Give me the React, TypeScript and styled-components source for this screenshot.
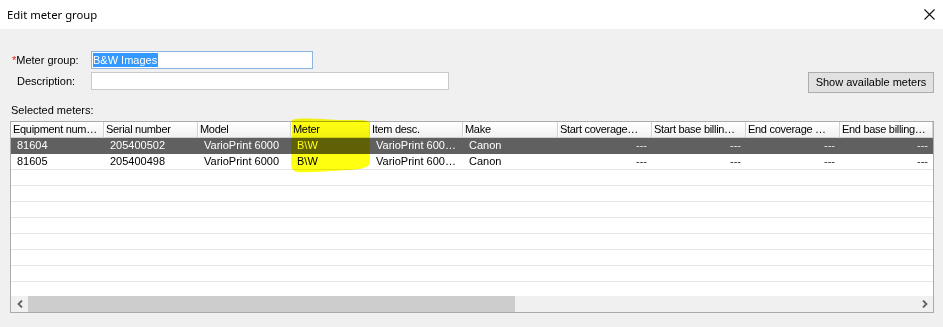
import { type FC } from 'react';
import styled, { createGlobalStyle } from 'styled-components';

const GlobalStyle = createGlobalStyle`
  html, body {
    margin: 0;
    padding: 0;
    background: #f0f0f0;
  }
  body {
    font-family: 'Liberation Sans', Arial, sans-serif;
    font-size: 11px;
    color: #000;
  }
`;

const Window = styled.div`
  width: 943px;
  height: 327px;
  overflow: hidden;
  background: #f0f0f0;
  display: flex;
  flex-direction: column;
`;

const TitleBar = styled.div`
  height: 29px;
  flex: none;
  background: #fff;
  display: flex;
  align-items: center;
  justify-content: space-between;
  padding: 0 8px 0 7px;
  font-family: 'Noto Sans', 'Open Sans', sans-serif;
  font-size: 11.3px;
  color: #000;
`;

const Body = styled.div`
  flex: 1;
  display: flex;
  flex-direction: column;
  padding: 22px 9px 0 10px;
`;

const FormRow = styled.div<{ $gap?: number }>`
  display: flex;
  align-items: center;
  height: 18px;
  margin-bottom: ${(p) => p.$gap ?? 0}px;
`;

const Label = styled.label<{ $indent: number }>`
  width: 81px;
  flex: none;
  padding-left: ${(p) => p.$indent}px;
  box-sizing: border-box;
  white-space: nowrap;
`;

const Required = styled.span`
  color: #e0201a;
`;

const TextBox = styled.div<{ $width: number; $focused?: boolean }>`
  width: ${(p) => p.$width}px;
  height: 18px;
  box-sizing: border-box;
  background: #fff;
  border: 1px solid ${(p) => (p.$focused ? '#8fb4e0' : '#c9c9c9')};
  display: flex;
  align-items: center;
  padding-left: 1px;
`;

const Selection = styled.span`
  background: #3399ff;
  color: #fff;
  line-height: 14px;
  padding: 0 1px 0 0;
`;

const Spacer = styled.div`
  flex: 1;
`;

const Button = styled.button`
  width: 126px;
  height: 21px;
  box-sizing: border-box;
  border: 1px solid #adadad;
  background: #e1e1e1;
  font-family: inherit;
  font-size: 11px;
  color: #000;
  padding: 0;
  margin-top: 2px;
`;

const Caption = styled.div`
  margin-top: 14px;
  height: 13px;
  line-height: 13px;
  padding-left: 1px;
`;

const TableWrap = styled.div`
  position: relative;
  margin-top: 4px;
  width: 924px;
`;

const Table = styled.div`
  height: 192px;
  box-sizing: border-box;
  border: 1px solid #a9abb0;
  background: #fff;
  display: flex;
  flex-direction: column;
  overflow: hidden;
`;

const HeaderRow = styled.div`
  display: flex;
  height: 15px;
  flex: none;
  background: linear-gradient(#ffffff, #f1f1f1);
  border-bottom: 1px solid #d0d0d0;
`;

const HeaderCell = styled.div<{ $w: number }>`
  width: ${(p) => p.$w}px;
  flex: none;
  box-sizing: border-box;
  padding-left: 2px;
  border-right: 1px solid #d2d2d2;
  box-shadow: inset 1px 0 0 #ffffff;
  line-height: 15px;
  letter-spacing: -0.3px;
  white-space: nowrap;
  overflow: hidden;
`;

const Rows = styled.div`
  flex: 1;
  overflow: hidden;
`;

const Row = styled.div<{ $selected?: boolean }>`
  display: flex;
  height: 16px;
  box-sizing: border-box;
  border-bottom: 1px solid ${(p) => (p.$selected ? '#606060' : '#e4e4e4')};
  background: ${(p) => (p.$selected ? '#606060' : '#fff')};
  color: ${(p) => (p.$selected ? '#fff' : '#000')};
`;

const Cell = styled.div<{ $w: number; $right?: boolean; $dim?: boolean }>`
  width: ${(p) => p.$w}px;
  flex: none;
  box-sizing: border-box;
  padding: ${(p) => (p.$right ? '0 5px 0 0' : '0 0 0 6px')};
  text-align: ${(p) => (p.$right ? 'right' : 'left')};
  line-height: 15px;
  white-space: nowrap;
  overflow: hidden;
  opacity: ${(p) => (p.$dim ? 0.85 : 1)};
`;

const ScrollBar = styled.div`
  height: 16px;
  flex: none;
  display: flex;
  background: #f0f0f0;
`;

const ScrollButton = styled.div`
  width: 17px;
  flex: none;
  display: flex;
  align-items: center;
  justify-content: center;
  background: #f0f0f0;
`;

const Thumb = styled.div`
  width: 487px;
  background: #cdcdcd;
`;

const Track = styled.div`
  flex: 1;
`;

const Highlight = styled.svg`
  position: absolute;
  left: 279px;
  top: -4px;
  mix-blend-mode: multiply;
  pointer-events: none;
`;

type Col = { title: string; w: number; right?: boolean };

const columns: Col[] = [
  { title: 'Equipment num…', w: 93 },
  { title: 'Serial number', w: 94 },
  { title: 'Model', w: 93 },
  { title: 'Meter', w: 79 },
  { title: 'Item desc.', w: 93 },
  { title: 'Make', w: 95 },
  { title: 'Start coverage…', w: 94, right: true },
  { title: 'Start base billin…', w: 94, right: true },
  { title: 'End coverage …', w: 94, right: true },
  { title: 'End base billing…', w: 93, right: true },
];

const data = [
  ['81604', '205400502', 'VarioPrint 6000', 'B\\W', 'VarioPrint 600…', 'Canon', '---', '---', '---', '---'],
  ['81605', '205400498', 'VarioPrint 6000', 'B\\W', 'VarioPrint 600…', 'Canon', '---', '---', '---', '---'],
];

const CloseIcon: FC = () => (
  <svg width="11" height="11" viewBox="0 0 11 11">
    <path d="M0.5 0.5 L10.5 10.5 M10.5 0.5 L0.5 10.5" stroke="#111" strokeWidth="1.1" />
  </svg>
);

const Chevron: FC<{ dir: 'left' | 'right' }> = ({ dir }) => (
  <svg width="6" height="8" viewBox="0 0 6 8">
    <path
      d={dir === 'left' ? 'M5 0.5 L1.5 4 L5 7.5' : 'M1 0.5 L4.5 4 L1 7.5'}
      fill="none"
      stroke="#606060"
      strokeWidth="1.8"
    />
  </svg>
);

const App: FC = () => {
  return (
    <Window>
      <GlobalStyle />
      <TitleBar>
        <span>Edit meter group</span>
        <CloseIcon />
      </TitleBar>
      <Body>
        <FormRow $gap={3}>
          <Label $indent={2}>
            <Required>*</Required>Meter group:
          </Label>
          <TextBox $width={222} $focused>
            <Selection>B&amp;W Images</Selection>
          </TextBox>
        </FormRow>
        <FormRow>
          <Label $indent={7}>Description:</Label>
          <TextBox $width={358} />
          <Spacer />
          <Button>Show available meters</Button>
        </FormRow>
        <Caption>Selected meters:</Caption>
        <TableWrap>
          <Table>
            <HeaderRow>
              {columns.map((c) => (
                <HeaderCell key={c.title} $w={c.w}>
                  {c.title}
                </HeaderCell>
              ))}
            </HeaderRow>
            <Rows>
              {data.map((r, i) => (
                <Row key={r[0]} $selected={i === 0}>
                  {r.map((v, j) => (
                    <Cell key={j} $w={columns[j].w} $right={columns[j].right} $dim={v === '---'}>
                      {v}
                    </Cell>
                  ))}
                </Row>
              ))}
              {Array.from({ length: 7 }).map((_, i) => (
                <Row key={`e${i}`} />
              ))}
            </Rows>
            <ScrollBar>
              <ScrollButton>
                <Chevron dir="left" />
              </ScrollButton>
              <Thumb />
              <Track />
              <ScrollButton>
                <Chevron dir="right" />
              </ScrollButton>
            </ScrollBar>
          </Table>
          <Highlight width="84" height="58" viewBox="0 0 84 58">
            <path
              d="M3 3 C10 0, 30 2, 50 3 C65 3.5, 76 2, 80 5 L81 44 C81 50, 76 52, 60 53 C40 54, 20 56, 8 55 C3 54, 2 50, 2 45 Z"
              fill="#ffff10"
            />
          </Highlight>
        </TableWrap>
      </Body>
    </Window>
  );
};

export default App;
